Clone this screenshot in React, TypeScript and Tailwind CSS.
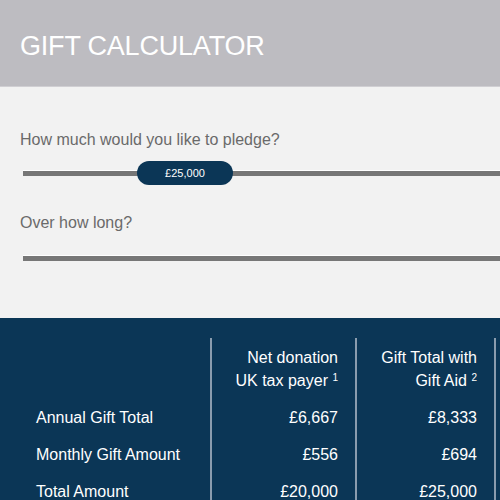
const rows = [
  { label: "Annual Gift Total", net: "£6,667", total: "£8,333" },
  { label: "Monthly Gift Amount", net: "£556", total: "£694" },
  { label: "Total Amount", net: "£20,000", total: "£25,000" },
];

const Track = ({ children }: { children?: React.ReactNode }) => (
  <div className="relative ml-[23px] h-[24px]">
    <div className="absolute left-0 right-0 top-[10px] h-[5px] bg-[#777777] shadow-[0_-1px_0_#ffffff]" />
    {children}
  </div>
);

export default function App() {
  return (
    <div
      className="h-[500px] w-[500px] overflow-hidden bg-[#f2f2f2]"
      style={{ fontFamily: '"Liberation Sans", Arial, sans-serif' }}
    >
      <div className="flex h-[87px] items-center border-b border-[#d0cfd3] bg-[#bdbcc1] pl-5 pt-[7px]">
        <h1 className="text-[27px] leading-none tracking-[-0.2px] text-white">
          GIFT CALCULATOR
        </h1>
      </div>

      <div className="h-[231px] pt-[43px]">
        <p className="pl-5 text-[16px] leading-[20px] text-[#6a6a6a]">
          How much would you like to pledge?
        </p>
        <div className="mt-[11px]">
          <Track>
            <div className="absolute left-[114px] top-0 flex h-[24px] w-[96px] items-center justify-center rounded-full bg-[#0b3656] text-[11px] text-white">
              £25,000
            </div>
          </Track>
        </div>
        <p className="mt-[28px] pl-5 text-[16px] leading-[20px] text-[#6a6a6a]">
          Over how long?
        </p>
        <div className="mt-[13px]">
          <Track />
        </div>
      </div>

      <div className="h-[182px] bg-[#0b3656] pt-[20px] text-[16px] text-white">
        <div className="grid grid-cols-[210px_145px_139px_1fr]">
          <div />
          <div className="border-l-2 border-[#8a9cae] pr-[17px] pt-[8px] text-right leading-[23px]">
            <div>Net donation</div>
            <div>
              UK tax payer <sup className="text-[10px]">1</sup>
            </div>
          </div>
          <div className="border-l-2 border-[#8a9cae] pr-[17px] pt-[8px] text-right leading-[23px]">
            <div>Gift Total with</div>
            <div>
              Gift Aid <sup className="text-[10px]">2</sup>
            </div>
          </div>
          <div className="border-l-2 border-[#8a9cae]" />

          {rows.map((r, i) => (
            <div key={r.label} className="contents">
              <div className={`pl-9 leading-[37px] ${i === 0 ? "pt-[7px]" : ""}`}>{r.label}</div>
              <div className={`border-l-2 border-[#8a9cae] pr-[17px] text-right leading-[37px] ${i === 0 ? "pt-[7px]" : ""}`}>
                {r.net}
              </div>
              <div className={`border-l-2 border-[#8a9cae] pr-[17px] text-right leading-[37px] ${i === 0 ? "pt-[7px]" : ""}`}>
                {r.total}
              </div>
              <div className="border-l-2 border-[#8a9cae]" />
            </div>
          ))}
        </div>
      </div>
    </div>
  );
}
